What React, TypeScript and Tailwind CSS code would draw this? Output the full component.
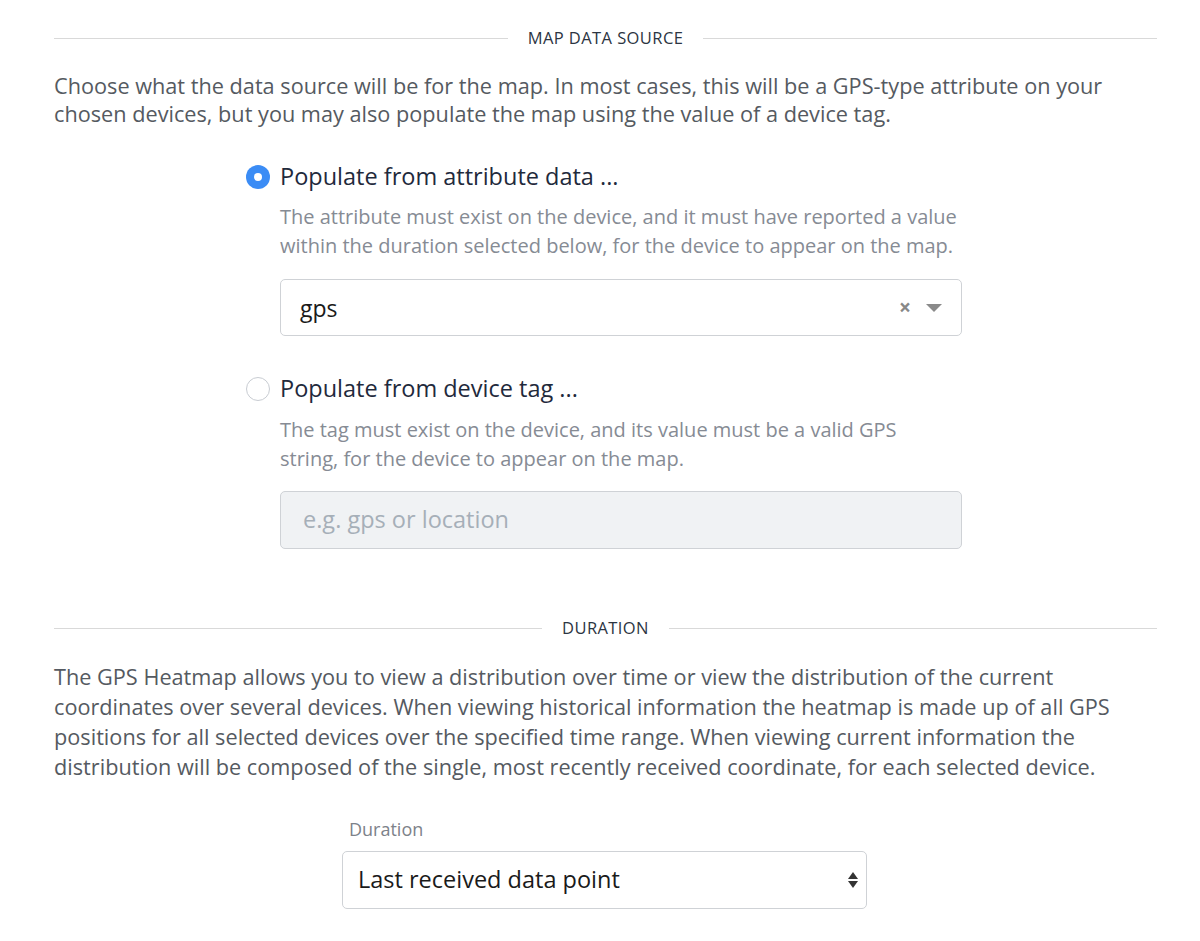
import React from 'react';

const font = { fontFamily: '"Open Sans", "Noto Sans", sans-serif' };

const SectionTitle: React.FC<{ title: string }> = ({ title }) => (
  <div className="flex items-center gap-4 h-[20px]">
    <div className="flex-1 h-px bg-[#d9d9d9]" />
    <span className="text-[16.5px] tracking-wide text-[#2c3542] px-1">{title}</span>
    <div className="flex-1 h-px bg-[#d9d9d9]" />
  </div>
);

const Radio: React.FC<{ checked?: boolean }> = ({ checked }) =>
  checked ? (
    <span className="w-[24px] h-[24px] rounded-full bg-[#3b8cf5] flex items-center justify-center shrink-0">
      <span className="w-[8px] h-[8px] rounded-full bg-white" />
    </span>
  ) : (
    <span className="w-[24px] h-[24px] rounded-full border border-[#c8ccd2] bg-white shrink-0" />
  );

export default function App() {
  return (
    <div className="bg-white min-h-screen px-[54px] pt-[28px] text-[#555a61]" style={font}>
      <div className="w-[1103px]">
        <SectionTitle title="MAP DATA SOURCE" />
        <p className="mt-[24px] text-[21.7px] leading-[28px] text-[#555a61]">
          Choose what the data source will be for the map. In most cases, this will be a GPS-type attribute on your chosen devices, but you may also populate the map using the value of a device tag.
        </p>

        <div className="ml-[192px] mt-[31px] w-[716px]">
          <div className="flex items-center gap-[10px]">
            <Radio checked />
            <span className="text-[23.5px] text-[#1f2a3c]">Populate from attribute data ...</span>
          </div>
          <p className="ml-[34px] mt-[8px] w-[677px] text-[20px] leading-[29px] text-[#868b94]">
            The attribute must exist on the device, and it must have reported a value within the duration selected below, for the device to appear on the map.
          </p>
          <div className="ml-[34px] mt-[19px] h-[57px] border border-[#cfd2d6] rounded-[5px] flex items-center pl-[19px] pr-[19px]">
            <span className="text-[23px] text-[#1a1a1a] flex-1">gps</span>
            <span className="text-[#888] text-[21px] font-bold mr-[15px] leading-none">×</span>
            <span className="w-0 h-0 border-l-[8px] border-r-[8px] border-t-[8px] border-l-transparent border-r-transparent border-t-[#8a8a8a]" />
          </div>

          <div className="flex items-center gap-[10px] mt-[35px]">
            <Radio />
            <span className="text-[23.5px] text-[#1f2a3c]">Populate from device tag ...</span>
          </div>
          <p className="ml-[34px] mt-[8px] w-[677px] text-[20px] leading-[29px] text-[#868b94]">
            The tag must exist on the device, and its value must be a valid GPS string, for the device to appear on the map.
          </p>
          <div className="ml-[34px] mt-[18px] h-[58px] border border-[#cfd2d6] rounded-[5px] bg-[#f0f2f4] flex items-center pl-[22px]">
            <span className="text-[23.5px] text-[#a6afb8]">e.g. gps or location</span>
          </div>
        </div>

        <div className="mt-[70px]">
          <SectionTitle title="DURATION" />
        </div>
        <p className="mt-[23px] text-[21.7px] leading-[30px] text-[#555a61]">
          The GPS Heatmap allows you to view a distribution over time or view the distribution of the current coordinates over several devices. When viewing historical information the heatmap is made up of all GPS positions for all selected devices over the specified time range. When viewing current information the distribution will be composed of the single, most recently received coordinate, for each selected device.
        </p>

        <div className="ml-[288px] mt-[34px] w-[525px]">
          <div className="ml-[7px] text-[18px] text-[#7d828a]">Duration</div>
          <div className="mt-[8px] h-[58px] border border-[#cfd2d6] rounded-[5px] flex items-center pl-[15px] pr-[8px]">
            <span className="text-[23.5px] text-[#1a1a1a] flex-1">Last received data point</span>
            <span className="flex flex-col items-center gap-[2px]">
              <span className="w-0 h-0 border-l-[5px] border-r-[5px] border-b-[7px] border-l-transparent border-r-transparent border-b-[#333]" />
              <span className="w-0 h-0 border-l-[5px] border-r-[5px] border-t-[7px] border-l-transparent border-r-transparent border-t-[#333]" />
            </span>
          </div>
        </div>
      </div>
    </div>
  );
}
